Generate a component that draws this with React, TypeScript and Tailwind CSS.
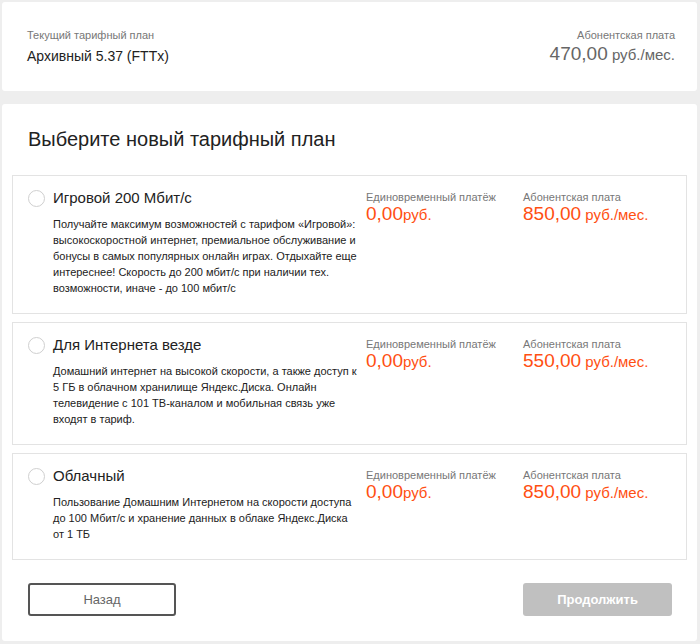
import React from "react";

type Plan = { name: string; desc: string; price: string };

const plans: Plan[] = [
  {
    name: "Игровой 200 Мбит/с",
    desc: "Получайте максимум возможностей с тарифом «Игровой»: высокоскоростной интернет, премиальное обслуживание и бонусы в самых популярных онлайн играх. Отдыхайте еще интереснее! Скорость до 200 мбит/с при наличии тех. возможности, иначе - до 100 мбит/с",
    price: "850,00",
  },
  {
    name: "Для Интернета везде",
    desc: "Домашний интернет на высокой скорости, а также доступ к 5 ГБ в облачном хранилище Яндекс.Диска. Онлайн телевидение с 101 ТВ-каналом и мобильная связь уже входят в тариф.",
    price: "550,00",
  },
  {
    name: "Облачный",
    desc: "Пользование Домашним Интернетом на скорости доступа до 100 Мбит/с и хранение данных в облаке Яндекс.Диска от 1 ТБ",
    price: "850,00",
  },
];

function PlanBox({ p }: { p: Plan }) {
  return (
    <div className="flex border border-[#e3e3e3] pt-[12px] pb-[17px]">
      <div className="flex w-[353px] shrink-0">
        <div className="pl-[15px] pt-[2px]">
          <div className="h-[17px] w-[17px] rounded-full border border-[#cfcfcf] bg-white" />
        </div>
        <div className="ml-[8px] w-[306px]">
          <div className="text-[15px] leading-[20px] text-[#222]">{p.name}</div>
          <div className="mt-[8px] text-[11px] leading-[16px] text-[#222] font-medium">{p.desc}</div>
        </div>
      </div>
      <div className="w-[157px] pt-[2px]">
        <div className="text-[11px] leading-[14px] text-[#777]">Единовременный платёж</div>
        <div className="text-[#ff4f12] leading-[20px]">
          <span className="text-[19px]">0,00</span>
          <span className="text-[15px]">руб.</span>
        </div>
      </div>
      <div className="pt-[2px]">
        <div className="text-[11px] leading-[14px] text-[#777]">Абонентская плата</div>
        <div className="text-[#ff4f12] leading-[20px]">
          <span className="text-[19px]">{p.price}</span>
          <span className="text-[15px]"> руб./мес.</span>
        </div>
      </div>
    </div>
  );
}

export default function App() {
  return (
    <div
      className="min-h-[644px] w-[700px] bg-[#eeeeee] pt-[2px] pl-[2px] pr-[3px]"
      style={{ fontFamily: '"Liberation Sans", Arial, sans-serif' }}
    >
      <div className="flex items-start justify-between rounded-[3px] bg-white pl-[25px] pr-[22px] pt-[26px] h-[89px]">
        <div>
          <div className="text-[11px] leading-[14px] text-[#777]">Текущий тарифный план</div>
          <div className="mt-[5px] text-[14px] leading-[18px] text-[#222]">Архивный 5.37 (FTTx)</div>
        </div>
        <div className="text-right">
          <div className="text-[11px] leading-[14px] text-[#777]">Абонентская плата</div>
          <div className="leading-[24px] text-[#666]">
            <span className="text-[19px]">470,00</span>
            <span className="text-[15px]"> руб./мес.</span>
          </div>
        </div>
      </div>
      <div className="mt-[13px] rounded-[3px] bg-white px-[10px] pt-[21px] pb-[25px]">
        <h1 className="pl-[16px] text-[20px] leading-[28px] text-[#222]">Выберите новый тарифный план</h1>
        <div className="mt-[22px] flex flex-col gap-[8px]">
          {plans.map((p) => (
            <PlanBox key={p.name} p={p} />
          ))}
        </div>
        <div className="mt-[23px] flex justify-between pl-[16px] pr-[15px]">
          <button className="h-[33px] w-[148px] rounded-[3px] border-2 border-[#555] text-[13px] text-[#666]">
            Назад
          </button>
          <button className="h-[33px] w-[149px] rounded-[3px] bg-[#c0c0c0] text-[13px] font-bold text-white">
            Продолжить
          </button>
        </div>
      </div>
    </div>
  );
}
